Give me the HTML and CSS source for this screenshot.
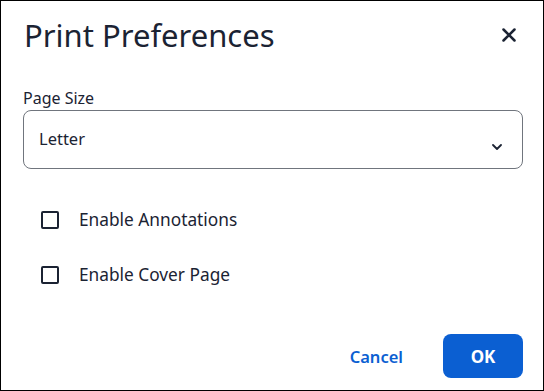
FILE: index.html
```html
<!DOCTYPE html>
<html lang="en">
<head>
    <meta charset="UTF-8">
    <title>Print Preferences</title>
    <link rel="stylesheet" href="styles.css">
</head>
<body>
    <div class="dialog">
        <div class="header">
            <h2>Print Preferences</h2>
            <button class="close" aria-label="Close">
                <svg width="14" height="14" viewBox="0 0 14 14"><path d="M1.5 1.5 L12.5 12.5 M12.5 1.5 L1.5 12.5" stroke="#1b2333" stroke-width="2.5" stroke-linecap="round"/></svg>
            </button>
        </div>

        <div class="body">
            <label class="field-label" for="size">Page Size</label>
            <div class="select">
                <span>Letter</span>
                <svg width="10" height="6" viewBox="0 0 10 6"><path d="M1 1 L5 5 L9 1" fill="none" stroke="#1b2333" stroke-width="1.8" stroke-linecap="round" stroke-linejoin="round"/></svg>
            </div>

            <div class="checks">
                <label class="check"><span class="box"></span>Enable Annotations</label>
                <label class="check"><span class="box"></span>Enable Cover Page</label>
            </div>
        </div>

        <div class="footer">
            <button class="btn-link">Cancel</button>
            <button class="btn-primary">OK</button>
        </div>
    </div>
</body>
</html>
```

FILE: styles.css
```css
body { margin: 0; font-family: "Noto Sans", "Open Sans", sans-serif; color: #1b2333; background: #fff; }
.dialog { width: 544px; height: 391px; box-sizing: border-box; border: 1px solid #000; display: flex; flex-direction: column; }
.header { display: flex; align-items: center; justify-content: space-between; padding: 14px 20px 0 23px; height: 40px; }
.header h2 { margin: 0; font-size: 31px; font-weight: 400; line-height: 40px; }
.close { border: 0; background: none; padding: 0; width: 20px; height: 20px; display: flex; align-items: center; justify-content: center; margin-right: 4px; }
.body { padding: 0 20px 0 22px; margin-top: 32px; }
.field-label { display: block; font-size: 16px; line-height: 22px; }
.select { margin-top: 1px; height: 59px; box-sizing: border-box; border: 1px solid #70757d; border-radius: 8px; display: flex; align-items: center; justify-content: space-between; padding: 0 20px 0 15px; font-size: 16.5px; }
.select span { margin-top: -2px; }
.select svg { margin-top: 14px; }
.checks { margin-top: 42px; padding-left: 18px; display: flex; flex-direction: column; gap: 37px; }
.check { display: flex; align-items: center; font-size: 17.3px; line-height: 18px; }
.box { width: 18px; height: 18px; box-sizing: border-box; border: 2px solid #1b2333; border-radius: 2px; margin-right: 20px; }
.footer { margin-top: auto; display: flex; justify-content: flex-end; align-items: center; gap: 40px; padding: 0 20px 12px 0; }
.btn-link { border: 0; background: none; color: #0b5fd2; font-family: inherit; font-size: 16.5px; font-weight: 600; padding: 0; }
.btn-primary { width: 80px; height: 44px; border: 0; border-radius: 8px; background: #0b5fd2; color: #fff; font-family: inherit; font-size: 17px; font-weight: 700; }
```
